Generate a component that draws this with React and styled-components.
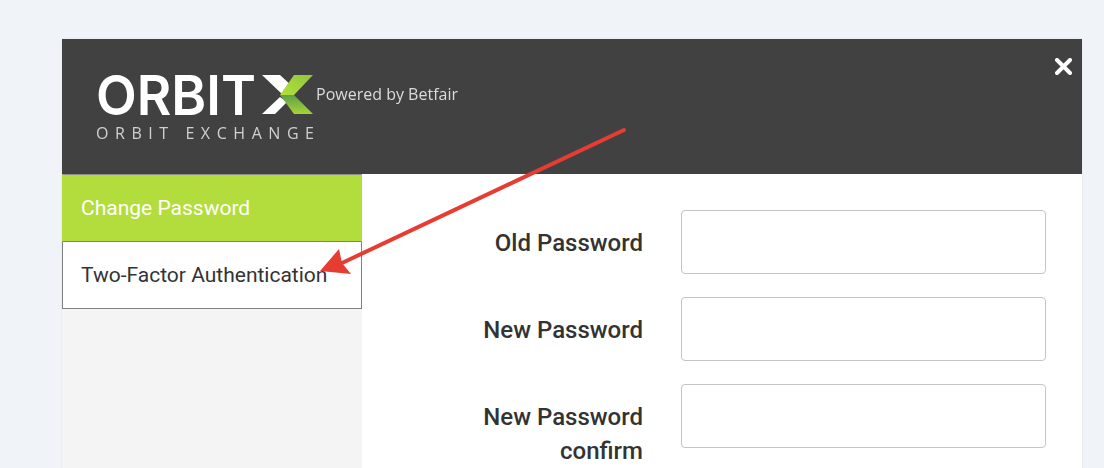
import React from "react";
import styled, { createGlobalStyle } from "styled-components";

const Global = createGlobalStyle`
  html, body { margin: 0; padding: 0; height: 468px; overflow: hidden; background: #f0f4f8; }
  body { font-family: Roboto, "Liberation Sans", sans-serif; }
`;
const Page = styled.div`
  position: relative;
  height: 468px;
  overflow: hidden;
  padding: 39px 22px 0 62px;
  box-sizing: border-box;
`;
const Modal = styled.div`
  background: #fff;
  box-shadow: 0 0 2px rgba(0, 0, 0, 0.08);
`;
const Header = styled.header`
  position: relative;
  height: 135px;
  background: #414141;
  display: flex;
  padding: 30px 0 0 30px;
  box-sizing: border-box;
`;
const LogoArt = styled.svg`
  display: block;
  filter: blur(0.35px);
`;
const Close = styled.button`
  position: absolute;
  top: 19px;
  right: 10px;
  width: 17px;
  height: 17px;
  padding: 0;
  border: 0;
  background: none;
  display: block;
`;
const Body = styled.div`
  display: flex;
  min-height: 400px;
`;
const Sidebar = styled.nav`
  width: 300px;
  flex: none;
  background: #f4f4f4;
`;
const NavItem = styled.div`
  height: ${(p) => (p.$active ? "68px" : "67px")};
  box-sizing: border-box;
  border: 1px solid ${(p) => (p.$active ? "#b2dd3c" : "#808080")};
  border-top: ${(p) => (p.$active ? "1px solid #8c8c8c" : "0")};
  border-bottom-color: #808080;
  background: ${(p) => (p.$active ? "#b2dd3c" : "#fff")};
  color: ${(p) => (p.$active ? "#fff" : "#333")};
  font-size: 21px;
  line-height: 66px;
  padding-left: 18px;
  white-space: nowrap;
`;
const Form = styled.form`
  flex: 1;
  padding: 36px 36px 0 0;
  display: grid;
  grid-template-columns: 281px 365px;
  column-gap: 38px;
  row-gap: 23px;
  justify-content: start;
  align-items: start;
  align-content: start;
`;
const Label = styled.label`
  font-size: 24px;
  font-weight: 500;
  line-height: 34px;
  color: #333;
  text-align: right;
  padding-top: 16px;
`;
const Input = styled.input`
  box-sizing: border-box;
  width: 365px;
  height: 64px;
  border: 1px solid #c4c4c4;
  border-radius: 4px;
  background: #fff;
  outline: none;
  display: block;
`;
const Overlay = styled.svg`
  position: absolute;
  left: 0;
  top: 0;
  pointer-events: none;
`;

function Logo() {
  return (
    <LogoArt width="370" height="80" viewBox="0 0 370 80" role="img" aria-label="OrbitX logo">
      <defs>
        <linearGradient id="chevLow" x1="0" y1="0" x2="0" y2="1">
          <stop offset="0" stopColor="#5f9f4c" />
          <stop offset="1" stopColor="#a6d335" />
        </linearGradient>
        <linearGradient id="chevTop" x1="1" y1="0" x2="0" y2="1">
          <stop offset="0" stopColor="#8fc63f" />
          <stop offset="1" stopColor="#b4e03a" />
        </linearGradient>
      </defs>
      <text x="4" y="46" fontFamily="Inter, sans-serif" fontWeight="600" fontSize="55" fill="#fff" textLength="160" lengthAdjust="spacingAndGlyphs">ORBIT</text>
      <polygon points="170,6 188,6 201,18 191,26" fill="#fff" />
      <polygon points="170,45 188,28 195,33 183,45" fill="#fff" />
      <polygon points="221,6 202,6 188,26 202,26" fill="url(#chevTop)" />
      <polygon points="188,26 202,26 221,45 202,45" fill="url(#chevLow)" />
      <text x="224" y="31" fontFamily="'Open Sans', sans-serif" fontSize="17" fill="#dcdcdc" textLength="142" lengthAdjust="spacingAndGlyphs">Powered by Betfair</text>
      <text x="4" y="70" fontFamily="'Open Sans', sans-serif" fontSize="16" fill="#d0d0d0" textLength="218">ORBIT EXCHANGE</text>
    </LogoArt>
  );
}

export default function App() {
  return (
    <Page>
      <Global />
      <Modal>
        <Header>
          <Logo />
          <Close aria-label="Close">
            <svg width="17" height="17" viewBox="0 0 17 17">
              <path d="M2 2 L15 15 M15 2 L2 15" stroke="#fff" strokeWidth="4" strokeLinecap="round" />
            </svg>
          </Close>
        </Header>
        <Body>
          <Sidebar>
            <NavItem $active>Change Password</NavItem>
            <NavItem>Two-Factor Authentication</NavItem>
          </Sidebar>
          <Form>
            <Label>Old Password</Label>
            <Input type="password" />
            <Label>New Password</Label>
            <Input type="password" />
            <Label>New Password<br />confirm</Label>
            <Input type="password" />
          </Form>
        </Body>
      </Modal>
      <Overlay width="1104" height="468" viewBox="0 0 1104 468">
        <line x1="624" y1="130" x2="342" y2="263" stroke="#e63c32" strokeWidth="4" strokeLinecap="round" />
        <polygon points="320,271 339,249 342,263 351,274" fill="#e63c32" />
      </Overlay>
    </Page>
  );
}
